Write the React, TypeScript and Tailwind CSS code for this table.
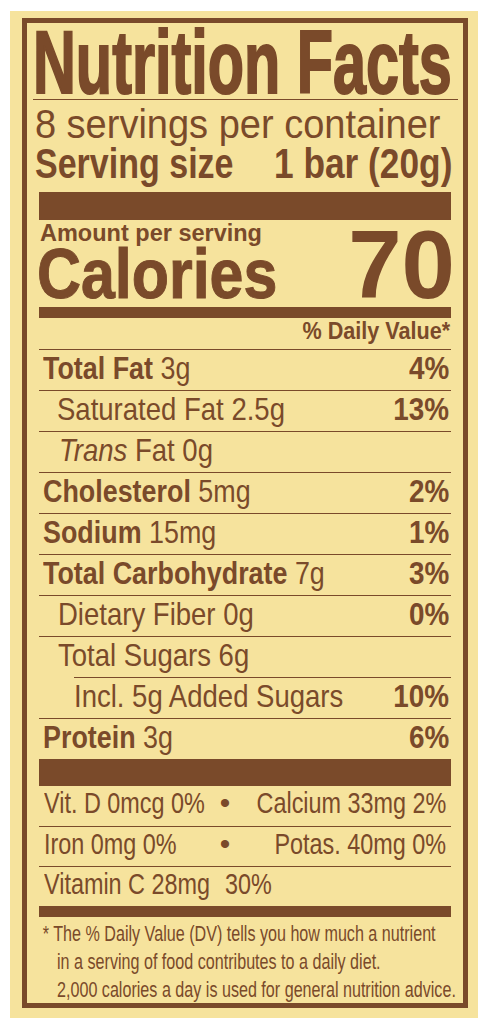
import type { ReactNode } from 'react';

function NutrientRow({
  children,
  dv,
  textPad = 'pl-[4px]',
  inset = '',
  squeeze = 'scale-x-[0.84]',
}: {
  children: ReactNode;
  dv?: string;
  textPad?: string;
  inset?: string;
  squeeze?: string;
}) {
  return (
    <div
      className={`flex h-[41px] items-start border-t border-[#7a4a2a] pr-[2px] text-[32px] leading-[36px] ${inset}`}
    >
      <div className={`min-w-0 flex-1 whitespace-nowrap ${textPad}`}>
        <span className={`inline-block origin-left ${squeeze}`}>{children}</span>
      </div>
      {dv && <div className="shrink-0 origin-right scale-x-[0.87] font-bold">{dv}</div>}
    </div>
  );
}

function VitaminRow({ left, right, first = false }: { left: string; right: string; first?: boolean }) {
  return (
    <div
      className={`flex h-[40px] whitespace-nowrap pl-[5px] pr-[5px] text-[30px] leading-[34px] ${first ? '' : 'border-t border-[#7a4a2a]'}`}
    >
      <div className="w-[171px] min-w-0 shrink-0">
        <span className="inline-block origin-left scale-x-[0.78]">{left}</span>
      </div>
      <div className="w-[20px] shrink-0 text-center">•</div>
      <div className="flex min-w-0 flex-1 justify-end">
        <span className="shrink-0 origin-right scale-x-[0.78]">{right}</span>
      </div>
    </div>
  );
}

export default function App() {
  return (
    <div className="h-[1031px] w-[490px] overflow-hidden bg-white pl-[10px] pt-[11px]">
      <div className="h-[1007px] w-[468px] bg-[#f6e39d] pl-[12px] pt-[7px] font-['Liberation_Sans',Arial,sans-serif] text-[#7a4a2a]">
        <div className="h-[990px] w-[446px] border-[5px] border-[#7a4a2a]">
          {/* header */}
          <div className="ml-[6px] mr-[5px] pt-[2px]">
            <div className="h-[75px] border-b border-[#7a4a2a]">
              <h1 className="w-max origin-left scale-x-[0.667] whitespace-nowrap text-[89px] font-bold leading-[74px] [-webkit-text-stroke:2px_#7a4a2a]">
                Nutrition Facts
              </h1>
            </div>
            <p className="w-max origin-left scale-x-[0.95] whitespace-nowrap pl-[2px] text-[40px] leading-[48px]">
              8 servings per container
            </p>
            <div className="flex whitespace-nowrap pl-[2px] pr-[6px] text-[42px] font-bold leading-[31px]">
              <div className="min-w-0 flex-1">
                <span className="inline-block origin-left scale-x-[0.81]">Serving size</span>
              </div>
              <span className="shrink-0 origin-right scale-x-[0.84]">1 bar (20g)</span>
            </div>
          </div>

          <div className="mx-[12px]">
            <div className="mt-[13px] h-[28px] bg-[#7a4a2a]" />

            {/* calories */}
            <div className="flex h-[87px] items-end justify-between font-bold">
              <div className="self-start">
                <div className="whitespace-nowrap pl-[1px] text-[23.5px] leading-[27px]">Amount per serving</div>
                <div className="-ml-[2px] w-max origin-left scale-x-[0.87] text-[70px] leading-[54px] [-webkit-text-stroke:1px_#7a4a2a]">
                  Calories
                </div>
              </div>
              <div className="-mr-[4px] text-[96px] leading-[84px]">70</div>
            </div>
            <div className="h-[11px] bg-[#7a4a2a]" />
            <div className="h-[31px]">
              <div className="ml-auto w-max origin-right scale-x-[0.9] whitespace-nowrap pr-[1px] text-[24px] font-bold leading-[26px]">
                % Daily Value*
              </div>
            </div>

            {/* nutrients */}
            <NutrientRow dv="4%">
              <b>Total Fat</b> 3g
            </NutrientRow>
            <NutrientRow dv="13%" textPad="pl-[18px]" squeeze="scale-x-[0.86]">
              Saturated Fat 2.5g
            </NutrientRow>
            <NutrientRow textPad="pl-[20px]" squeeze="scale-x-[0.86]">
              <i>Trans</i> Fat 0g
            </NutrientRow>
            <NutrientRow dv="2%">
              <b>Cholesterol</b> 5mg
            </NutrientRow>
            <NutrientRow dv="1%">
              <b>Sodium</b> 15mg
            </NutrientRow>
            <NutrientRow dv="3%">
              <b>Total Carbohydrate</b> 7g
            </NutrientRow>
            <NutrientRow dv="0%" textPad="pl-[19px]" squeeze="scale-x-[0.86]">
              Dietary Fiber 0g
            </NutrientRow>
            <NutrientRow textPad="pl-[19px]" squeeze="scale-x-[0.86]">
              Total Sugars 6g
            </NutrientRow>
            <NutrientRow dv="10%" textPad="pl-0" inset="ml-[35px]" squeeze="scale-x-[0.86]">
              Incl. 5g Added Sugars
            </NutrientRow>
            <NutrientRow dv="6%">
              <b>Protein</b> 3g
            </NutrientRow>

            <div className="h-[27px] bg-[#7a4a2a]" />

            {/* vitamins & minerals */}
            <VitaminRow first left="Vit. D 0mcg 0%" right="Calcium 33mg 2%" />
            <VitaminRow left="Iron 0mg 0%" right="Potas. 40mg 0%" />
            <div className="flex h-[40px] whitespace-nowrap border-t border-[#7a4a2a] pl-[5px] text-[30px] leading-[34px]">
              <div className="w-[181px] min-w-0 shrink-0">
                <span className="inline-block origin-left scale-x-[0.78]">Vitamin C 28mg</span>
              </div>
              <span className="origin-left scale-x-[0.78]">30%</span>
            </div>

            <div className="h-[11px] bg-[#7a4a2a]" />

            {/* footnote */}
            <div className="pl-[18px] pt-[3px]">
              <p className="w-max origin-left scale-x-[0.75] whitespace-nowrap indent-[-19px] text-[21.5px] leading-[28px]">
                * The % Daily Value (DV) tells you how much a nutrient
                <br />
                in a serving of food contributes to a daily diet.
                <br />
                2,000 calories a day is used for general nutrition advice.
              </p>
            </div>
          </div>
        </div>
      </div>
    </div>
  );
}
